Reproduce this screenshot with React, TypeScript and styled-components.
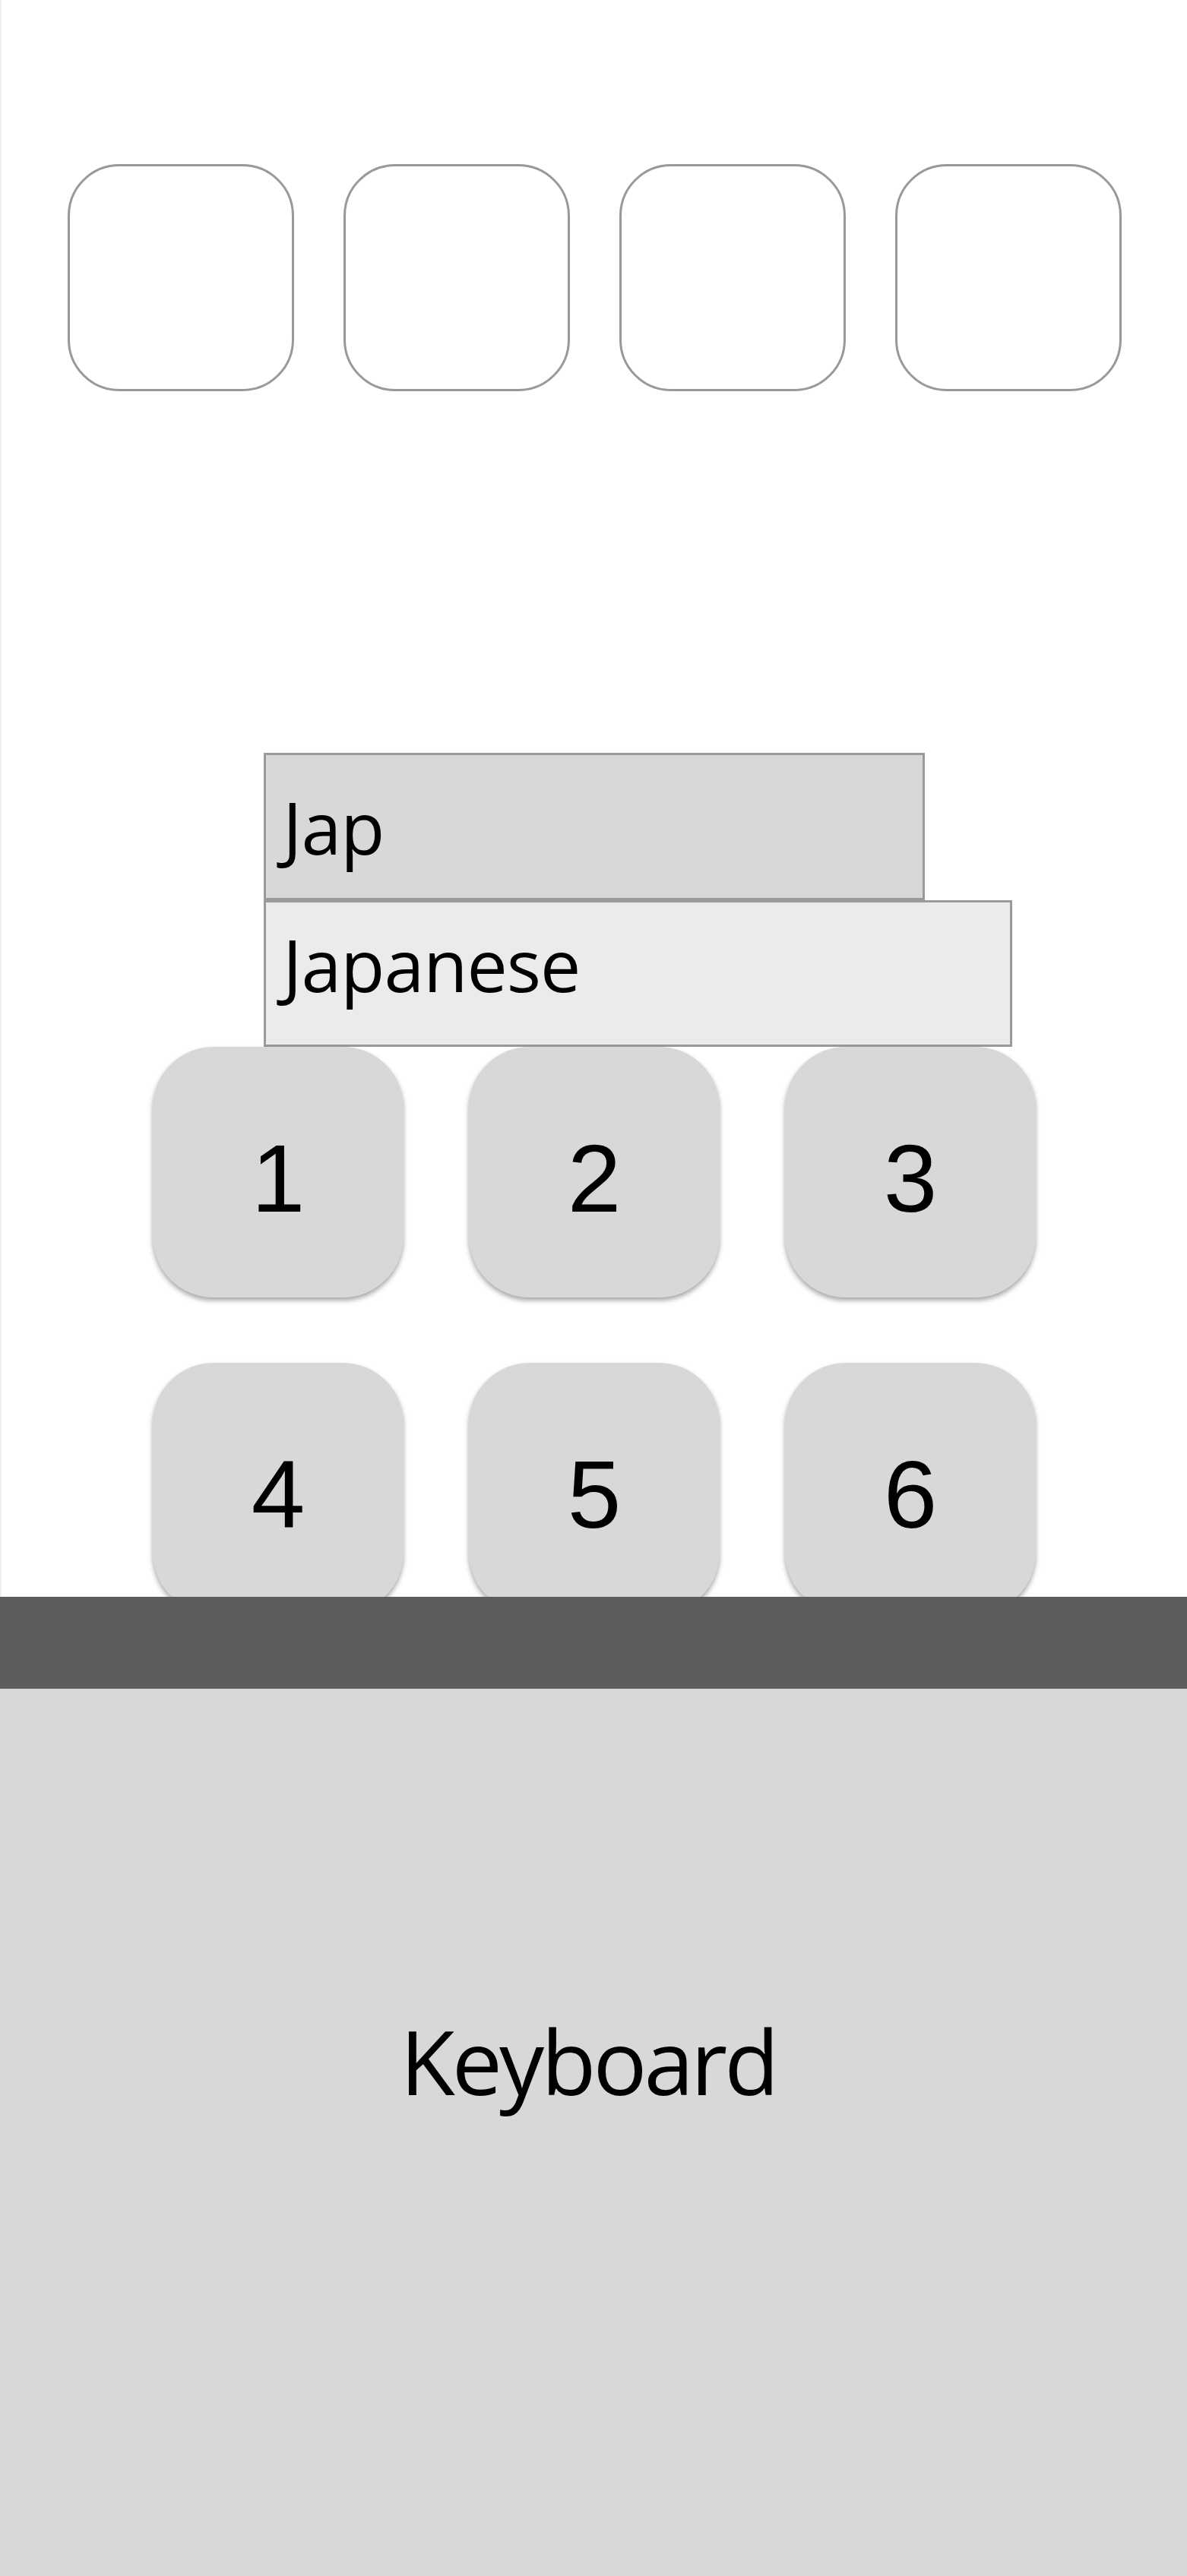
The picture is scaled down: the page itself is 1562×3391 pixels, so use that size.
import styled, { createGlobalStyle } from "styled-components";

const GlobalStyle = createGlobalStyle`
	html, body {
		margin: 0;
		padding: 0;
		background: #ffffff;
	}
	* {
		box-sizing: border-box;
	}
`;

const digits = ["1", "2", "3", "4", "5", "6"];

const App = () => {
	return (
		<>
			<GlobalStyle />
			<Page>
				<Screen>
					<CodeRow>
						<CodeBox />
						<CodeBox />
						<CodeBox />
						<CodeBox />
					</CodeRow>

					<SearchArea>
						<SearchInput>Jap</SearchInput>
						<Suggestion>Japanese</Suggestion>
					</SearchArea>

					<Keypad>
						{digits.map((d) => (
							<Key key={d}>{d}</Key>
						))}
					</Keypad>
				</Screen>

				<KeyboardBar />
				<KeyboardPanel>
					<KeyboardLabel>Keyboard</KeyboardLabel>
				</KeyboardPanel>
			</Page>
		</>
	);
};

const Page = styled.div`
	display: flex;
	flex-direction: column;
	width: 1562px;
	min-height: 3391px;
	background: #ffffff;
`;

// keypad runs on under the keyboard bar, so the screen clips it
const Screen = styled.div`
	height: 2102px;
	overflow: hidden;
	padding-top: 216px;
	border-left: 2px solid #f0f0f0;
`;

const CodeRow = styled.div`
	display: grid;
	grid-template-columns: repeat(4, 298px);
	column-gap: 65px;
	padding-left: 87px;
`;

const CodeBox = styled.div`
	height: 299px;
	border: 3px solid #999999;
	border-radius: 68px;
	background: #ffffff;
`;

const SearchArea = styled.div`
	width: 870px;
	margin: 476px 0 0 345px;
`;

const fieldText = `
	font-family: "Open Sans", "Noto Sans", sans-serif;
	font-size: 95px;
	line-height: 1;
	color: #000000;
	letter-spacing: -1px;
	padding-left: 22px;
`;

const SearchInput = styled.div`
	${fieldText}
	height: 194px;
	padding-top: 47px;
	background: #d8d8d8;
	border: 3px solid #9a9a9a;
`;

const Suggestion = styled.div`
	${fieldText}
	width: 985px;
	height: 193px;
	padding-top: 34px;
	background: #ebebeb;
	border: 3px solid #9a9a9a;
`;

const Keypad = styled.div`
	display: grid;
	grid-template-columns: repeat(3, 330px);
	grid-auto-rows: 330px;
	column-gap: 86px;
	row-gap: 86px;
	justify-content: center;
`;

const Key = styled.div`
	display: flex;
	align-items: center;
	justify-content: center;
	padding-top: 16px;
	background: #d8d8d8;
	border-radius: 80px;
	box-shadow: 0 4px 6px rgba(0, 0, 0, 0.35);
	font-family: "Liberation Sans", Arial, sans-serif;
	font-size: 127px;
	line-height: 1;
	color: #000000;
`;

const KeyboardBar = styled.div`
	height: 121px;
	background: #5d5d5d;
`;

const KeyboardPanel = styled.div`
	flex: 1;
	display: flex;
	justify-content: center;
	padding: 431px 14px 0 0;
	background: #d8d8d8;
`;

const KeyboardLabel = styled.div`
	font-family: "Open Sans", "Noto Sans", sans-serif;
	font-size: 118px;
	line-height: 1;
	letter-spacing: -4px;
	color: #000000;
`;

export default App;
